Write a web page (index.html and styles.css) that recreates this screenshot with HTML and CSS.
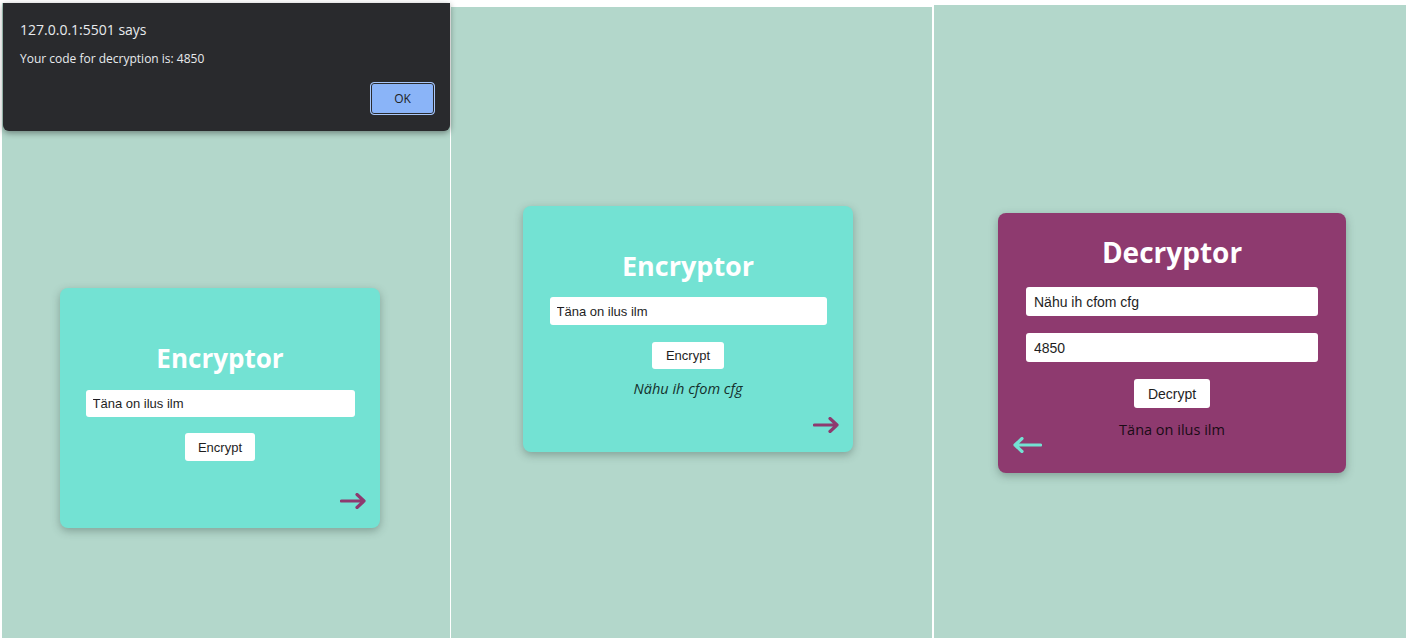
FILE: index.html
```html
<!DOCTYPE html>
<html lang="en">
<head>
<meta charset="utf-8">
<title>Encryptor / Decryptor</title>
<link rel="stylesheet" href="styles.css">
</head>
<body>
<div class="screen">
  <section class="panel panel-one">
    <div class="card card-enc card-one">
      <h1 class="title">Encryptor</h1>
      <input class="field" type="text" value="Täna on ilus ilm">
      <button class="btn">Encrypt</button>
      <svg class="arrow arrow-right" viewBox="0 0 26 16" width="26" height="16"><path d="M1.5 8 H24 M17 1.5 L24 8 L17 14.5"/></svg>
    </div>
    <div class="alert">
      <div class="alert-title">127.0.0.1:5501 says</div>
      <div class="alert-msg">Your code for decryption is: 4850</div>
      <div class="alert-actions"><button class="alert-ok">OK</button></div>
    </div>
  </section>

  <section class="panel panel-two">
    <div class="card card-enc card-two">
      <h1 class="title">Encryptor</h1>
      <input class="field" type="text" value="Täna on ilus ilm">
      <button class="btn">Encrypt</button>
      <p class="result result-italic">Nähu ih cfom cfg</p>
      <svg class="arrow arrow-right" viewBox="0 0 26 16" width="26" height="16"><path d="M1.5 8 H24 M17 1.5 L24 8 L17 14.5"/></svg>
    </div>
  </section>

  <section class="panel panel-three">
    <div class="card card-dec card-three">
      <h1 class="title">Decryptor</h1>
      <input class="field" type="text" value="Nähu ih cfom cfg">
      <input class="field" type="text" value="4850">
      <button class="btn">Decrypt</button>
      <p class="result">Täna on ilus ilm</p>
      <svg class="arrow arrow-left" viewBox="0 0 29 16" width="29" height="16"><path d="M27.5 8 H2 M9 1.5 L2 8 L9 14.5"/></svg>
    </div>
  </section>
</div>
</body>
</html>
```
FILE: styles.css
```css
* { box-sizing: border-box; }

html, body {
  margin: 0;
  padding: 0;
  background: #ffffff;
  overflow: hidden;
}

.screen {
  position: relative;
  display: flex;
  align-items: flex-start;
  height: 638px;
  width: 1406px;
}

.panel {
  background: #b3d7cb;
  display: flex;
  flex-direction: column;
  align-items: flex-start;
}

.panel-one {
  margin-left: 2px;
  margin-top: 3px;
  width: 448px;
  height: 635px;
  padding: 285px 0 0 58px;
}

.panel-two {
  margin-left: 1px;
  margin-top: 7px;
  width: 481px;
  height: 631px;
  padding: 199px 0 0 72px;
}

.panel-three {
  margin-left: 2px;
  margin-top: 5px;
  width: 472px;
  height: 633px;
  padding: 208px 0 0 64px;
}

.card {
  position: relative;
  display: flex;
  flex-direction: column;
  align-items: center;
  border-radius: 8px;
  box-shadow: 0 3px 8px rgba(40, 60, 55, 0.35);
}

.card-enc { background: #73e2d3; }
.card-dec { background: #8e3a6f; }

.card-one { width: 320px; height: 240px; padding-top: 55px; }
.card-two { width: 330px; height: 246px; padding-top: 45px; }
.card-three { width: 348px; height: 260px; padding-top: 22px; }

.title {
  margin: 0;
  color: #ffffff;
  font-family: "Open Sans", "DejaVu Sans", sans-serif;
  font-weight: 700;
  text-align: center;
}

.card-one .title { font-size: 26px; line-height: 30px; height: 30px; margin-bottom: 17px; }
.card-two .title { font-size: 27px; line-height: 30px; height: 30px; margin-bottom: 16px; }
.card-three .title { font-size: 28px; line-height: 34px; height: 34px; margin-bottom: 18px; }

.field {
  display: block;
  border: none;
  border-radius: 3px;
  background: #ffffff;
  font-family: "Liberation Sans", Arial, sans-serif;
  color: #1e1e1e;
  padding: 0 7px;
  outline: none;
}

.card-one .field { width: 269px; height: 27px; font-size: 13px; margin-bottom: 16px; }
.card-two .field { width: 277px; height: 28px; font-size: 13px; margin-bottom: 17px; }
.card-three .field { width: 292px; height: 29px; font-size: 14px; margin-bottom: 17px; padding-left: 8px; }

.btn {
  display: block;
  border: none;
  border-radius: 3px;
  background: #ffffff;
  font-family: "Liberation Sans", Arial, sans-serif;
  color: #1e1e1e;
  padding: 0;
  cursor: pointer;
}

.card-one .btn { width: 70px; height: 28px; font-size: 13px; }
.card-two .btn { width: 72px; height: 27px; font-size: 13px; margin-bottom: 10px; }
.card-three .btn { width: 76px; height: 29px; font-size: 14px; margin-bottom: 11px; }

.result {
  margin: 0;
  font-family: "Open Sans", "DejaVu Sans", sans-serif;
  text-align: center;
}

.card-two .result { font-size: 14.5px; line-height: 20px; color: #15302c; }
.card-three .result { font-size: 14.5px; line-height: 22px; color: #1a0c16; }

.result-italic { font-style: italic; }

.arrow {
  position: absolute;
  fill: none;
  stroke-width: 3.2;
  stroke-linecap: round;
  stroke-linejoin: round;
}

.arrow-right { stroke: #8e3a6f; right: 14px; bottom: 19px; }
.card-three .arrow-left { stroke: #73e2d3; left: 15px; bottom: 20px; }

.alert {
  position: absolute;
  left: 3px;
  top: 3px;
  width: 447px;
  height: 128px;
  background: #292a2d;
  border-radius: 0 0 6px 6px;
  box-shadow: 0 2px 6px rgba(0, 0, 0, 0.4);
  padding: 18px 15px 0 17px;
  font-family: "Open Sans", "Noto Sans", sans-serif;
  color: #e8eaed;
}

.alert-title {
  font-size: 14px;
  line-height: 18px;
}

.alert-msg {
  margin-top: 12px;
  font-size: 12px;
  line-height: 16px;
}

.alert-actions {
  display: flex;
  justify-content: flex-end;
  margin-top: 15px;
}

.alert-ok {
  width: 65px;
  height: 33px;
  border: 1px solid #a8c7fa;
  border-radius: 4px;
  background: #8ab4f8;
  box-shadow: inset 0 0 0 1px #292a2d;
  color: #202124;
  font-family: "Open Sans", "Noto Sans", sans-serif;
  font-size: 12px;
  padding: 0;
}
```
